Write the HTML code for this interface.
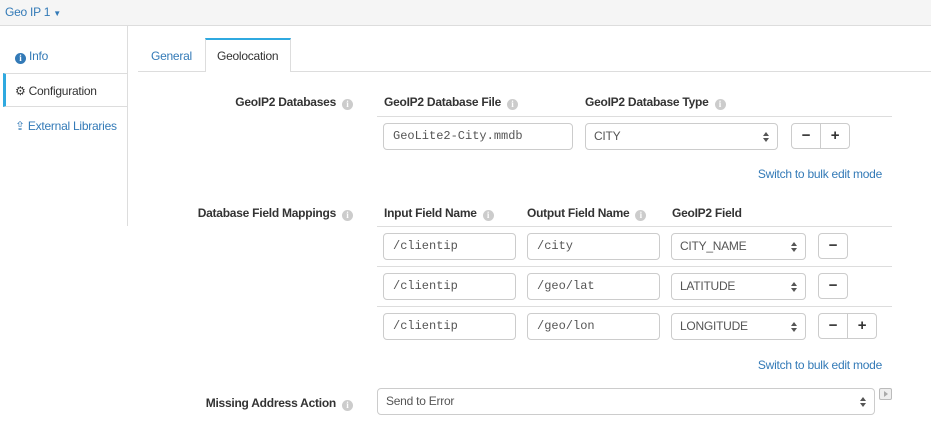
<!DOCTYPE html><html><head><style>
*{box-sizing:border-box;margin:0;padding:0}
body{width:931px;height:444px;background:#fff;font-family:"Liberation Sans",sans-serif;font-size:12px;letter-spacing:-0.25px;color:#333;position:relative;overflow:hidden}
.a{position:absolute}
.b{font-weight:bold}
.r{text-align:right}
.i{display:inline-block;width:11px;height:11px;border-radius:50%;background:#ccc;color:#fff;font-size:9px;text-align:center;line-height:11px;font-weight:bold;font-family:"Liberation Serif",serif;vertical-align:-1px;margin-left:6px;letter-spacing:0}
.in{position:absolute;border:1px solid #ccc;border-radius:4px;height:27px;padding:0 9px;line-height:25px;font-family:"Liberation Mono",monospace;font-size:12px;color:#555;letter-spacing:0}
.sel{position:absolute;border:1px solid #ccc;border-radius:4px;height:27px;padding:0 8px;line-height:25px;color:#555;font-size:12px}
.sel:after{content:"";position:absolute;right:8px;top:8px;width:0;height:0;border-left:3px solid transparent;border-right:3px solid transparent;border-bottom:4px solid #555}
.sel:before{content:"";position:absolute;right:8px;top:14px;width:0;height:0;border-left:3px solid transparent;border-right:3px solid transparent;border-top:4px solid #555}
.btn{position:absolute;border:1px solid #ccc;height:26px;width:30px;text-align:center;line-height:24px;font-weight:bold;font-size:15px;color:#333}
.l{position:absolute;height:1px;background:#ddd}
.lk{color:#337ab7}
</style></head><body>
<div class="a" style="left:0;top:0;width:931px;height:26px;background:#f5f5f5;border-bottom:1px solid #ddd"></div>
<div class="a lk" style="left:5px;top:5px">Geo IP 1 <span style="font-size:8px">▼</span></div>
<div class="a" style="left:127px;top:26px;width:1px;height:200px;background:#ddd"></div>
<div class="a lk" style="left:15px;top:49px"><span class="i" style="background:#337ab7;margin:0 3px 0 0">i</span>Info</div>
<div class="a" style="left:3px;top:73px;width:125px;height:34px;border:1px solid #ddd;border-left:3px solid #2fa9e0;background:#fff"></div>
<div class="a" style="left:15px;top:84px">⚙ Configuration</div>
<div class="a lk" style="left:15px;top:119px">⇪ External Libraries</div>
<div class="l" style="left:138px;top:71px;width:793px"></div>
<div class="a lk" style="left:151px;top:49px">General</div>
<div class="a" style="left:205px;top:38px;width:86px;height:34px;border:1px solid #ddd;border-top:2px solid #2fa9e0;border-bottom:none;background:#fff"></div>
<div class="a" style="left:217px;top:49px">Geolocation</div>

<div class="a b r" style="left:150px;width:203px;top:95px">GeoIP2 Databases<span class="i">i</span></div>
<div class="a b" style="left:384px;top:95px">GeoIP2 Database File<span class="i">i</span></div>
<div class="a b" style="left:585px;top:95px">GeoIP2 Database Type<span class="i">i</span></div>
<div class="l" style="left:377px;top:116px;width:515px"></div>
<div class="in" style="left:383px;top:123px;width:190px">GeoLite2-City.mmdb</div>
<div class="sel" style="left:585px;top:123px;width:193px">CITY</div>
<div class="btn" style="left:791px;top:123px;border-radius:4px 0 0 4px">−</div>
<div class="btn" style="left:820px;top:123px;border-radius:0 4px 4px 0">+</div>
<div class="a lk r" style="left:700px;width:182px;top:167px">Switch to bulk edit mode</div>

<div class="a b r" style="left:150px;width:203px;top:206px">Database Field Mappings<span class="i">i</span></div>
<div class="a b" style="left:384px;top:206px">Input Field Name<span class="i">i</span></div>
<div class="a b" style="left:527px;top:206px">Output Field Name<span class="i">i</span></div>
<div class="a b" style="left:672px;top:206px">GeoIP2 Field</div>
<div class="l" style="left:377px;top:226px;width:515px"></div>
<div class="in" style="left:383px;top:233px;width:133px">/clientip</div>
<div class="in" style="left:527px;top:233px;width:133px">/city</div>
<div class="sel" style="left:671px;top:233px;width:135px">CITY_NAME</div>
<div class="btn" style="left:818px;top:233px;border-radius:4px">−</div>
<div class="l" style="left:377px;top:266px;width:515px"></div>
<div class="in" style="left:383px;top:273px;width:133px">/clientip</div>
<div class="in" style="left:527px;top:273px;width:133px">/geo/lat</div>
<div class="sel" style="left:671px;top:273px;width:135px">LATITUDE</div>
<div class="btn" style="left:818px;top:273px;border-radius:4px">−</div>
<div class="l" style="left:377px;top:306px;width:515px"></div>
<div class="in" style="left:383px;top:313px;width:133px">/clientip</div>
<div class="in" style="left:527px;top:313px;width:133px">/geo/lon</div>
<div class="sel" style="left:671px;top:313px;width:135px">LONGITUDE</div>
<div class="btn" style="left:818px;top:313px;border-radius:4px 0 0 4px">−</div>
<div class="btn" style="left:847px;top:313px;border-radius:0 4px 4px 0">+</div>
<div class="a lk r" style="left:700px;width:182px;top:358px">Switch to bulk edit mode</div>

<div class="a b r" style="left:150px;width:203px;top:396px">Missing Address Action<span class="i">i</span></div>
<div class="sel" style="left:377px;top:388px;width:498px">Send to Error</div>
<div class="a" style="left:879px;top:388px;width:13px;height:12px;border:1px solid #bbb;border-radius:2px;background:#eee"><div style="position:absolute;left:4px;top:2px;border-top:3px solid transparent;border-bottom:3px solid transparent;border-left:4px solid #aaa"></div></div>
</body></html>
